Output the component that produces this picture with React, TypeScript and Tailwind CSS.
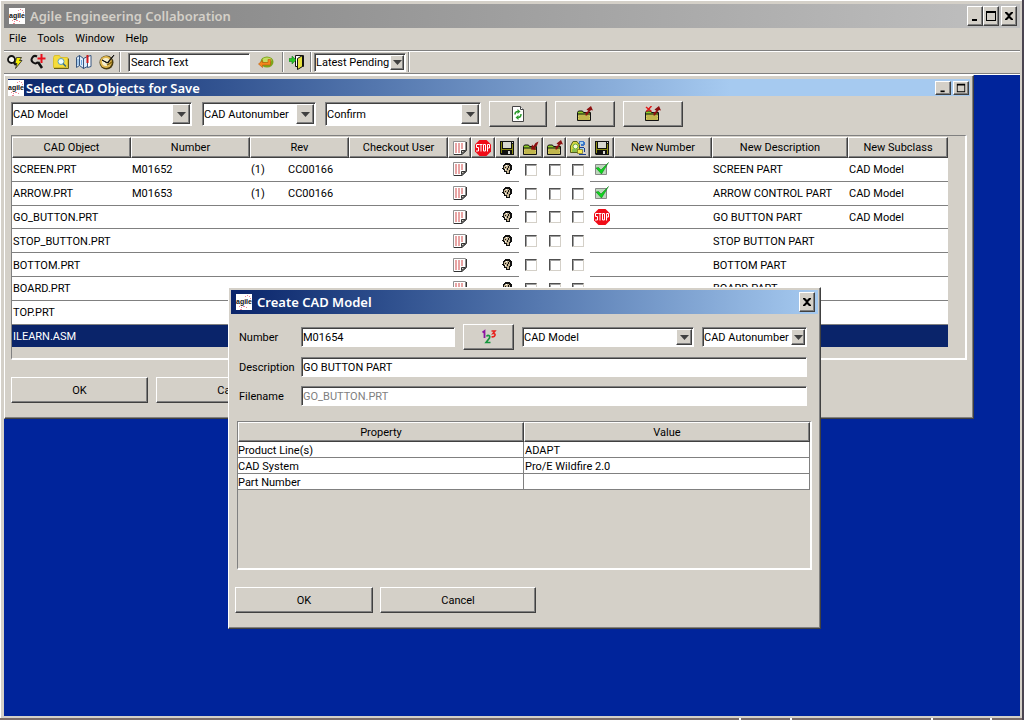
import React from "react";
import clsx from "clsx";

const raised =
	"border border-t-white border-l-white border-r-[#404040] border-b-[#404040] bg-[#d4d0c8] shadow-[inset_-1px_-1px_0_#808080]";
const sunken =
	"border border-t-[#808080] border-l-[#808080] border-r-white border-b-white bg-white shadow-[inset_1px_1px_0_#404040]";
const titleClassnames = "font-['Noto_Sans',sans-serif] text-[13px] leading-4 font-semibold";

/* ---------- icons ---------- */

const AgileLogo = () => (
	<svg className="size-4 shrink-0" viewBox="0 0 16 16" aria-hidden="true">
		<path fill="#fff" d="M0 0h16v16H0z" />
		<path
			fill="#f08898"
			d="M9 2h1v1H9zM11 1h1v1h-1zM13 2h1v1h-1zM14 4h1v1h-1zM3 12h1v1H3zM5 13h1v1H5zM7 12h2v1H7zM10 13h1v1h-1zM4 15h2v1H4z"
		/>
		<text
			x="0"
			y="9.500"
			fontSize="7"
			fontWeight="700"
			fontFamily="Liberation Sans, sans-serif"
			fill="#111"
		>
			agile
		</text>
	</svg>
);

const SearchBolt = () => (
	<svg className="size-4" viewBox="0 0 16 16">
		<circle cx="4.500" cy="5.500" r="3.500" fill="#f4f4ee" stroke="#111" strokeWidth="1.800" />
		<path d="M7 8.500l2 2.500" stroke="#111" strokeWidth="2.500" />
		<path
			fill="#f5ee00"
			stroke="#222"
			strokeWidth=".8"
			d="M9.500 3.500h5l-2 3H15l-6.500 8 1.500-5H8z"
		/>
	</svg>
);

const SearchPlus = () => (
	<svg className="size-4" viewBox="0 0 16 16">
		<path d="M7 2.500A3.600 3.600 0 1 0 8 8" fill="none" stroke="#111" strokeWidth="2" />
		<path d="M8 8l4 6" stroke="#111" strokeWidth="2.500" />
		<path d="M11.500 0v9M7.500 4.500h8" stroke="#e8101c" strokeWidth="2" />
	</svg>
);

const FolderSearch = () => (
	<svg className="size-4" viewBox="0 0 16 16">
		<path fill="#f6dc3c" stroke="#d8c030" d="M.5 13.500V3.500l1-2h5l1 2h7v10z" />
		<path d="M1 14.500h14.500V4.500" fill="none" stroke="#6c6015" />
		<circle cx="8" cy="7.500" r="3" fill="#eefcff" stroke="#5aa0b8" />
		<path d="M10 9.500l3 3" stroke="#356c88" strokeWidth="1.500" />
	</svg>
);

const MapBook = () => (
	<svg className="size-4" viewBox="0 0 16 16">
		<path fill="#dcebfa" stroke="#37557e" d="M.5 3.500l3-2v10l-3 2zM3.500 1.500l4 3v10l-4-3zM7.500 4.500l4-2v10l-4 2z" />
		<path fill="#fff" stroke="#37557e" d="M11.500 2.500l3.500-1v11l-3.500 1z" />
		<path d="M11.500 1v8" stroke="#d01818" strokeWidth="2" />
		<path d="M2 5v6M5.500 6v5" stroke="#6ea6dc" />
	</svg>
);

const Compass = () => (
	<svg className="size-4" viewBox="0 0 16 16">
		<circle cx="7.500" cy="8.500" r="7" fill="#4a3c10" />
		<circle cx="7" cy="8" r="6" fill="#e0b850" />
		<circle cx="7" cy="8" r="4" fill="#f6eecb" />
		<path d="M3 6l5 3 7-8-6 8z" fill="#111" stroke="#111" />
		<path d="M8 11l5-3" stroke="#8c6a10" strokeWidth="1.500" />
	</svg>
);

const GoArrow = () => (
	<svg className="size-4" viewBox="0 0 16 16">
		<ellipse cx="9" cy="8" rx="6.500" ry="5.500" fill="#7da51c" />
		<ellipse cx="9" cy="6" rx="4.500" ry="2.500" fill="#c4dc62" />
		<path fill="#f5861c" stroke="#b85a0a" strokeWidth=".6" d="M.5 10l4-3.500v2H10V5.500h2.500v5.500h-8v2.500z" />
	</svg>
);

const ExitDoor = () => (
	<svg className="size-4" viewBox="0 0 16 16">
		<path fill="#fff" stroke="#111" d="M6.500 1.500h8v11h-8z" />
		<path fill="#e6e03c" stroke="#111" d="M8.500 4.500l5-3v11l-5 3z" />
		<path fill="#28c828" stroke="#0a6e14" strokeWidth=".5" d="M0 4.500h3V2l4 4-4 4V7.500H0z" />
	</svg>
);

const NotePage = () => (
	<svg className="mx-auto block size-4" viewBox="0 0 16 16">
		<path fill="#fff" stroke="#909090" d="M1.500 1.500h12v9l-4 4h-8z" />
		<path d="M14.500 2v8.500l-4.500 4H2" stroke="#333" fill="none" />
		<path fill="#d4d0c8" stroke="#333" d="M9.500 13.500v-3h4z" />
		<path
			d="M3 4h9M3 6h9M3 8h9M3 10h6M3 12h6"
			stroke="#d04848"
			strokeDasharray="2 1"
		/>
	</svg>
);

const StopSign = () => (
	<svg className="mx-auto block size-4" viewBox="0 0 16 16">
		<path fill="#f00c18" d="M4.500 0h7L16 4.500v7L11.500 16h-7L0 11.500v-7z" />
		<path
			fill="none"
			stroke="#fff"
			d="M4.500 4.500h-3v3h2v3.500H1M4.500 4.500h3M6 4.500v7M8.500 4.500h2v6.500h-2zM12.500 11.500V4.500h2V8h-2"
		/>
	</svg>
);

const Floppy = () => (
	<svg className="mx-auto block size-4" viewBox="0 0 16 16">
		<path fill="#111" d="M1 1h14v14H2l-1-1z" />
		<path fill="#8a8a10" d="M2 2h1v11H2zM13 4h1v10h-1z" />
		<path fill="#d8d8d0" d="M4 2h8v6H4zM13 2h1v1h-1z" />
		<path fill="#8a8a10" d="M3 9h10v1H3z" />
		<path fill="#d8d8d0" d="M9 11h2v3H9z" />
	</svg>
);

const Folder = ({ mark }: { mark: "in" | "out" | "cancel" }) => (
	<svg className="mx-auto block size-4" viewBox="0 0 16 16">
		<path fill="#8ecb28" stroke="#111" d="M.5 14.500v-8l1-1.500h4l1 1.500h7v8z" />
		<path fill="#d9cf6a" d="M1 8.500h12V14H1z" />
		<path
			d="M1.500 9.500h11M2.500 10.500h10M1.500 11.500h11M2.500 12.500h10M1.500 13.500h11"
			stroke="#a89c30"
			strokeDasharray="1 1"
		/>
		<path d="M1 8h12" stroke="#111" />
		{mark === "in" && (
			<path fill="#8c1010" d="M15.500 1.500l-1.500 4-2 2 1 2.500-5-.5 1-5L10.500 6l2-3z" />
		)}
		{mark !== "in" && (
			<path fill="#8c1010" d="M8.500 9.500V6.500l3-1.500L9.500 3.500 14 0l2 4.500-2-.5-2.500 3-1.500 2.500z" />
		)}
		{mark === "cancel" && (
			<path d="M1 1l5.500 4.500M6.500 0L1.500 5.500" stroke="#e01818" strokeWidth="1.500" />
		)}
	</svg>
);

const Users = () => (
	<svg className="mx-auto block size-4" viewBox="0 0 16 16">
		<path fill="#d8d840" stroke="#55601c" d="M.5 12.500V6l2.500-4.500h4L9.500 5v7.500z" />
		<circle cx="5.500" cy="6.500" r="2.500" fill="#fafad8" stroke="#5ca83c" />
		<path fill="#8cc050" d="M2 9h5v3H2z" />
		<path fill="#3c78c8" d="M9 1h5v1h1v3h-1v1h-3V4H9z" />
		<path fill="#a8d4f0" d="M10 2h3v2h-3zM10 8h4v2h-4z" />
		<path fill="#1c3c8c" d="M9 7h5v1H9zM14 8h1v4h-1zM9 14h7v1H9z" />
		<path fill="#f4ec50" stroke="#555510" strokeWidth=".6" d="M7.500 9.500h5v4h-5z" />
	</svg>
);

const Head = () => (
	<svg className="mx-auto block size-4" viewBox="0 0 16 16">
		<path fill="#111" d="M6 2h5v1h1v1h1v5h-1v1h-1v3H7v-2H5V9H4V8H3V7h1V4h1V3h1z" />
		<path fill="#c4b494" d="M6 4h4v1h1v4h-1v3H8v-2H6V8H5V5h1z" />
		<path fill="#111" d="M6 6h1v1H6zM9 5h1v2H9zM8 7h1v2H8z" />
		<path fill="#fff" d="M7 4h1v1H7zM6 8h1v1H6z" />
	</svg>
);

const GreenCheck = () => (
	<svg className="mx-auto block size-4" viewBox="0 0 16 16">
		<path fill="#bcd6bc" stroke="#888" d="M1.500 3.500h11v10h-11z" />
		<path fill="#0cd81c" stroke="#076e10" strokeWidth=".5" d="M2 7l2.500-.5L7 9l7.500-7.500L7.500 13z" />
	</svg>
);

const RefreshPage = () => (
	<svg className="mx-auto block size-4" viewBox="0 0 16 16">
		<path fill="#fff" stroke="#444" d="M2.500.5h8l3 3v12h-11z" />
		<path fill="#fff" stroke="#444" d="M10.500.5v3h3" />
		<path d="M5 8.500c0-2 1-3 3-3M11 8c0 2-1 3.500-3 3.500" fill="none" stroke="#2c9a2c" strokeWidth="1.500" />
		<path fill="#2c9a2c" d="M7.500 3l3 2.500-3 2.500zM8.500 9v5l-3-2.500z" />
	</svg>
);

const Digits = () => (
	<svg className="mx-auto block size-4" viewBox="0 0 16 16">
		<path d="M1.500 3.500l2-1.500v7" fill="none" stroke="#8c14a0" strokeWidth="1.800" />
		<path d="M5.500 7.500c1-2 4-1 3 1.500l-3.500 4.500h4.500" fill="none" stroke="#14963c" strokeWidth="1.600" />
		<path d="M10.500 2h3.500l-2 2.500c3-.5 3 4-1.500 3.200" fill="none" stroke="#e8201c" strokeWidth="1.600" />
	</svg>
);

/* ---------- window controls ---------- */

const glyphs = {
	minimize: "M3 9h5v2H3z",
	maximize: "M1 1h10v10H1zM2 3v7h8V3z",
	close: "M2 2h2l2 2 2-2h2v1L7 6l3 3v1H8L6 8l-2 2H2V9l3-3-3-3z",
};

interface CaptionButtonProps {
	kind: keyof typeof glyphs;
	small?: boolean;
}

const CaptionButton = ({ kind, small }: CaptionButtonProps) => (
	<button
		type="button"
		aria-label={kind}
		className={clsx(raised, "flex w-4 items-center justify-center", small ? "h-[14px]" : "h-5")}
	>
		<svg className={clsx("shrink-0", small ? "size-[10px]" : "size-3")} viewBox="0 0 12 12">
			<path fillRule="evenodd" d={glyphs[kind]} />
		</svg>
	</button>
);

interface DropDownProps {
	label: string;
	value: string;
	className: string;
	arrow?: string;
}

const DropDown = ({ label, value, className, arrow = "w-[18px]" }: DropDownProps) => (
	<div className={clsx(sunken, "relative p-px", className)}>
		<select aria-label={label} className="h-full w-full appearance-none pt-px outline-none">
			<option>{value}</option>
		</select>
		<span
			className={clsx(
				raised,
				"pointer-events-none absolute inset-y-px right-px flex items-center justify-center",
				arrow
			)}
		>
			<svg className="h-[5px] w-[9px]" viewBox="0 0 9 5">
				<path fill="#404040" d="M0 0h9L4.500 5z" />
			</svg>
		</span>
	</div>
);

const PushButton = ({
	className,
	label,
	children,
}: {
	className: string;
	label?: string;
	children: React.ReactNode;
}) => (
	<button type="button" aria-label={label} className={clsx(raised, "h-[26px]", className)}>
		{children}
	</button>
);

const Divider = () => <div className="h-5 w-[2px] border-r border-l border-r-white border-l-[#808080]" />;

/* ---------- CAD object list ---------- */

type CadObject = {
	name: string;
	number?: string;
	rev?: string;
	description?: string;
	subclass?: string;
	status?: "ok" | "stop";
};

const cadObjects: CadObject[] = [
	{ name: "SCREEN.PRT", number: "M01652", rev: "CC00166", description: "SCREEN PART", subclass: "CAD Model", status: "ok" },
	{ name: "ARROW.PRT", number: "M01653", rev: "CC00166", description: "ARROW CONTROL PART", subclass: "CAD Model", status: "ok" },
	{ name: "GO_BUTTON.PRT", description: "GO BUTTON PART", subclass: "CAD Model", status: "stop" },
	{ name: "STOP_BUTTON.PRT", description: "STOP BUTTON PART" },
	{ name: "BOTTOM.PRT", description: "BOTTOM PART" },
	{ name: "BOARD.PRT", description: "BOARD PART" },
	{ name: "TOP.PRT", description: "TOP PART" },
	{ name: "ILEARN.ASM" },
];

const columns: { head: React.ReactNode; width: string }[] = [
	{ head: "CAD Object", width: "w-[119px]" },
	{ head: "Number", width: "w-[119px]" },
	{ head: "Rev", width: "w-[99px]" },
	{ head: "Checkout User", width: "w-[99px]" },
	{ head: <NotePage />, width: "w-[23px]" },
	{ head: <StopSign />, width: "w-[24px]" },
	{ head: <Floppy />, width: "w-[24px]" },
	{ head: <Folder mark="in" />, width: "w-[24px]" },
	{ head: <Folder mark="out" />, width: "w-[23px]" },
	{ head: <Users />, width: "w-[24px]" },
	{ head: <Floppy />, width: "w-[24px]" },
	{ head: "New Number", width: "w-[98px]" },
	{ head: "New Description", width: "w-[136px]" },
	{ head: "New Subclass", width: "w-[100px]" },
];

const CadRow = ({ item }: { item: CadObject }) => {
	const selected = item.name === "ILEARN.ASM";
	const cell = clsx(
		"overflow-hidden p-0 pt-[2px] pl-px",
		selected ? "bg-[#0a246a] text-white" : "border-b border-[#808080] bg-white"
	);
	const iconCell = clsx("p-0", selected ? "bg-[#0a246a]" : "border-b border-[#808080] bg-white");
	return (
		<tr>
			<td className={cell}>{item.name}</td>
			<td className={cell}>{item.number}</td>
			<td className={cell}>
				{item.rev && (
					<div className="flex">
						<span className="w-[37px]">(1)</span>
						<span>{item.rev}</span>
					</div>
				)}
			</td>
			<td className={cell} />
			<td className={iconCell}>{!selected && <NotePage />}</td>
			<td className={iconCell} />
			<td className={iconCell}>{!selected && <Head />}</td>
			{["Check in", "Check out", "Assign"].map((action) => (
				<td key={action} className={clsx("p-0", selected ? "bg-[#0a246a]" : "bg-white")}>
					{!selected && (
						<input
							type="checkbox"
							aria-label={`${action} ${item.name}`}
							className="mx-auto block size-3 appearance-none border border-t-[#505050] border-r-[#d4d0c8] border-b-[#d4d0c8] border-l-[#505050] bg-white shadow-[inset_1px_1px_0_#a0a0a0]"
						/>
					)}
				</td>
			))}
			<td className={iconCell}>
				{item.status === "ok" && <GreenCheck />}
				{item.status === "stop" && <StopSign />}
			</td>
			<td className={cell} />
			<td className={cell}>{item.description}</td>
			<td className={cell}>{item.subclass}</td>
		</tr>
	);
};

const SelectWindow = () => (
	<section className="absolute top-0 left-0 w-[970px] border border-t-white border-r-[#404040] border-b-[#404040] border-l-white bg-[#d4d0c8] p-[3px] shadow-[inset_-1px_-1px_0_#808080]">
		<header className="flex h-[17px] items-center bg-linear-to-r from-[#0a246a] to-[#a6caf0] to-75% pr-px">
			<AgileLogo />
			<h2 className={clsx(titleClassnames, "ml-[2px] flex-1 text-white")}>
				Select CAD Objects for Save
			</h2>
			<div className="flex gap-[2px]">
				<CaptionButton kind="minimize" small />
				<CaptionButton kind="maximize" small />
			</div>
		</header>

		<div className="px-[3px] pt-[5px] pb-3">
			<div className="flex items-center">
				<DropDown label="Subclass" value="CAD Model" className="h-6 w-[181px]" />
				<DropDown label="Numbering" value="CAD Autonumber" className="ml-[10px] h-6 w-[114px]" />
				<DropDown label="Mode" value="Confirm" className="ml-[9px] h-6 w-[156px]" />
				<PushButton label="Refresh" className="ml-2 w-[58px]">
					<RefreshPage />
				</PushButton>
				<PushButton label="Check out" className="ml-2 w-[60px]">
					<Folder mark="out" />
				</PushButton>
				<PushButton label="Cancel checkout" className="ml-2 w-[60px]">
					<Folder mark="cancel" />
				</PushButton>
			</div>

			<div className="mt-2 h-[225px] border-t border-r-2 border-b-2 border-l border-t-[#808080] border-r-white border-b-white border-l-[#808080] pt-px">
				<table className="h-[210px] w-[936px] table-fixed border-separate border-spacing-0 text-left">
					<colgroup>
						{columns.map((column, index) => (
							<col key={index} className={column.width} />
						))}
					</colgroup>
					<thead>
						<tr className="h-[21px]">
							{columns.map((column, index) => (
								<th
									key={index}
									className={clsx(raised, "p-0 text-center leading-[15px] font-normal")}
								>
									{column.head}
								</th>
							))}
						</tr>
					</thead>
					<tbody>
						{cadObjects.map((item) => (
							<CadRow key={item.name} item={item} />
						))}
					</tbody>
				</table>
			</div>

			<div className="mt-[17px] flex gap-2">
				<PushButton className="w-[137px] pt-px">OK</PushButton>
				<PushButton className="w-[156px] pt-px">Cancel</PushButton>
			</div>
		</div>
	</section>
);

/* ---------- create dialog ---------- */

const properties = [
	["Product Line(s)", "ADAPT"],
	["CAD System", "Pro/E Wildfire 2.0"],
	["Part Number", ""],
];

const labelClassnames = "w-[66px] shrink-0 pt-[2px] pl-1";
const propertyClassnames =
	"border-r border-b border-[#808080] bg-white p-0 pt-[2px] leading-[13px]";

const CreateDialog = () => (
	<section
		role="dialog"
		aria-label="Create CAD Model"
		className="absolute top-[212px] left-[224px] w-[593px] border border-t-white border-r-[#404040] border-b-[#404040] border-l-white bg-[#d4d0c8] p-[2px] shadow-[inset_-1px_-1px_0_#808080]"
	>
		<header className="flex h-6 items-center bg-linear-to-r from-[#0a246a] to-[#a6caf0] pr-[3px] pl-[5px]">
			<AgileLogo />
			<h2 className={clsx(titleClassnames, "ml-[5px] flex-1 text-white")}>Create CAD Model</h2>
			<CaptionButton kind="close" />
		</header>

		<form className="px-1 pt-[10px] pb-[13px]">
			<div className="flex flex-col gap-[5px] pr-[7px]">
				<div className="flex items-center">
					<label className={labelClassnames} htmlFor="number">
						Number
					</label>
					<input
						id="number"
						className={clsx(sunken, "h-5 w-[154px] shrink-0 px-px pt-px")}
						defaultValue="M01654"
					/>
					<PushButton label="Assign number" className="ml-2 w-[51px] shrink-0">
						<Digits />
					</PushButton>
					<DropDown
						label="Subclass"
						value="CAD Model"
						className="ml-2 h-5 w-[172px] shrink-0"
						arrow="w-4"
					/>
					<DropDown
						label="Numbering"
						value="CAD Autonumber"
						className="ml-2 h-5 min-w-0 flex-1"
						arrow="w-[14px]"
					/>
				</div>
				<div className="flex h-6 items-center">
					<label className={labelClassnames} htmlFor="description">
						Description
					</label>
					<input
						id="description"
						className={clsx(sunken, "h-5 flex-1 px-px pt-px")}
						defaultValue="GO BUTTON PART"
					/>
				</div>
				<div className="flex h-6 items-center">
					<label className={labelClassnames} htmlFor="filename">
						Filename
					</label>
					<input
						id="filename"
						className={clsx(sunken, "h-5 flex-1 px-px pt-px text-[#808080]")}
						defaultValue="GO_BUTTON.PRT"
						disabled
					/>
				</div>
			</div>

			<div className="mx-[2px] mt-[13px] h-[149px] border-t border-r-2 border-b-2 border-l border-t-[#808080] border-r-white border-b-white border-l-[#808080]">
				<table className="w-full table-fixed border-separate border-spacing-0 text-left">
					<thead>
						<tr className="h-5">
							{["Property", "Value"].map((head) => (
								<th
									key={head}
									className={clsx(raised, "p-0 text-center leading-[15px] font-normal")}
								>
									{head}
								</th>
							))}
						</tr>
					</thead>
					<tbody>
						{properties.map(([property, value]) => (
							<tr key={property} className="h-4">
								<td className={propertyClassnames}>{property}</td>
								<td className={clsx(propertyClassnames, "pl-px")}>{value}</td>
							</tr>
						))}
					</tbody>
				</table>
			</div>

			<div className="mt-[17px] flex gap-[7px]">
				<PushButton className="w-[138px] pt-px">OK</PushButton>
				<PushButton className="w-[156px] pt-px">Cancel</PushButton>
			</div>
		</form>
	</section>
);

export default function App() {
	return (
		<div className="flex h-screen w-full flex-col overflow-hidden border-r-2 border-r-[#4a4450] bg-[#d4d0c8] font-[Roboto,sans-serif] text-[11px] leading-[14px] text-black">
			<div className="flex min-h-0 flex-1 flex-col border-t border-l border-white pt-[3px] pr-[2px] pb-[2px] pl-[3px]">
				<header className="flex h-6 shrink-0 items-center bg-linear-to-r from-[#808080] to-[#c0c0c0] pr-[3px] pl-[5px]">
					<AgileLogo />
					<h1 className={clsx(titleClassnames, "ml-[5px] flex-1 text-[#d4d0c8]")}>
						Agile Engineering Collaboration
					</h1>
					<CaptionButton kind="minimize" />
					<CaptionButton kind="maximize" />
					<div className="ml-[2px] flex">
						<CaptionButton kind="close" />
					</div>
				</header>

				<nav className="flex h-[22px] shrink-0 items-center gap-[11px] pl-[5px]">
					{["File", "Tools", "Window", "Help"].map((item) => (
						<button key={item} type="button">
							{item}
						</button>
					))}
				</nav>

				<div className="flex h-6 shrink-0 items-center border-t border-b border-[#808080] pl-[3px] shadow-[inset_0_1px_0_#fff]">
					<div className="flex gap-[7px]">
						<button type="button" aria-label="Quick search">
							<SearchBolt />
						</button>
						<button type="button" aria-label="New search">
							<SearchPlus />
						</button>
						<button type="button" aria-label="Browse">
							<FolderSearch />
						</button>
						<button type="button" aria-label="Map">
							<MapBook />
						</button>
						<button type="button" aria-label="Compass">
							<Compass />
						</button>
					</div>
					<div className="mr-[7px] ml-1">
						<Divider />
					</div>
					<input
						aria-label="Search"
						className={clsx(sunken, "h-[19px] w-[122px] px-[2px] pt-px")}
						defaultValue="Search Text"
					/>
					<button type="button" aria-label="Go" className="mx-2">
						<GoArrow />
					</button>
					<Divider />
					<button type="button" aria-label="Exit" className="mx-[5px]">
						<ExitDoor />
					</button>
					<Divider />
					<DropDown
						label="Revision"
						value="Latest Pending"
						className="mx-[2px] h-[19px] w-[92px]"
						arrow="w-[14px]"
					/>
					<Divider />
				</div>

				<main className="relative min-h-0 flex-1 border-t border-white bg-[#00249b]">
					<SelectWindow />
					<CreateDialog />
				</main>
			</div>
			<div className="flex h-[2px] shrink-0 justify-end bg-[#7a6c6a] pr-[30px]">
				<div className="w-[51px] border-l-2 border-white" />
				<div className="w-[141px] border-l-2 border-white" />
				<div className="w-[59px] border-l-2 border-white" />
				<div className="w-[2px] bg-white" />
			</div>
		</div>
	);
}
